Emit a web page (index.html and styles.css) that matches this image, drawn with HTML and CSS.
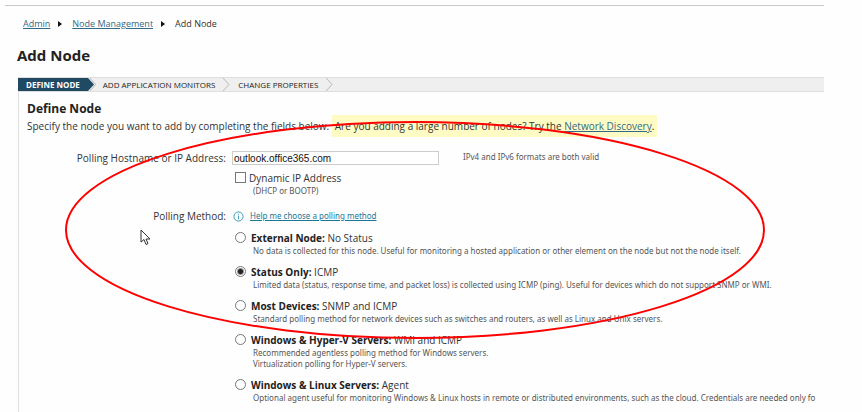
FILE: index.html
```html
<!DOCTYPE html>
<html lang="en">
<head>
<meta charset="utf-8">
<title>Add Node</title>
<link rel="stylesheet" href="styles.css">
</head>
<body>
<div class="page">
  <nav class="breadcrumb" aria-label="Breadcrumb">
    <a href="#">Admin</a>
    <svg class="arrow" viewBox="0 0 4 6" aria-hidden="true"><path d="M0 0 4 3 0 6Z"/></svg>
    <a href="#">Node Management</a>
    <svg class="arrow" viewBox="0 0 4 6" aria-hidden="true"><path d="M0 0 4 3 0 6Z"/></svg>
    <span>Add Node</span>
  </nav>
  <h1>Add Node</h1>
  <section class="wizard">
    <ol class="steps">
      <li class="step current">DEFINE NODE<svg class="tip" viewBox="0 0 10 13" aria-hidden="true"><path class="fill" d="M0 0H2L8 6.500 2 13H0Z"/><path class="line" d="M4 0 9.500 6.500 4 13"/></svg></li>
      <li class="step">ADD APPLICATION MONITORS<svg class="tip" viewBox="0 0 10 13" aria-hidden="true"><path class="line" d="M2 0 8 6.500 2 13"/></svg></li>
      <li class="step">CHANGE PROPERTIES<svg class="tip" viewBox="0 0 10 13" aria-hidden="true"><path class="line" d="M2 0 8 6.500 2 13"/></svg></li>
    </ol>
    <form class="panel">
      <h2>Define Node</h2>
      <p class="intro">Specify the node you want to add by completing the fields below. <span class="hint">Are you adding a large number of nodes? Try the <a href="#">Network Discovery</a>.</span></p>
      <div class="row">
        <label class="name" for="host">Polling Hostname or IP Address:</label>
        <div class="field">
          <input class="host" id="host" type="text" value="outlook.office365.com">
          <span class="note">IPv4 and IPv6 formats are both valid</span>
        </div>
      </div>
      <div class="row dynamic-row">
        <div class="option">
          <input id="dynamic" type="checkbox">
          <label for="dynamic">Dynamic IP Address</label>
          <p class="detail">(DHCP or BOOTP)</p>
        </div>
      </div>
      <div class="row">
        <span class="name" id="method">Polling Method:</span>
        <div class="help">
          <svg class="info" viewBox="0 0 12 12" aria-hidden="true"><circle cx="6" cy="6" r="5"/><path d="M6 5V9M6 3V4"/></svg>
          <a href="#">Help me choose a polling method</a>
        </div>
      </div>
      <div class="methods" role="radiogroup" aria-labelledby="method">
        <div class="option">
          <input id="external" type="radio" name="polling">
          <label for="external"><b>External Node:</b> No Status</label>
          <p class="detail">No data is collected for this node. Useful for monitoring a hosted application or other element on the node but not the node itself.</p>
        </div>
        <div class="option">
          <input id="status" type="radio" name="polling" checked>
          <label for="status"><b>Status Only:</b> ICMP</label>
          <p class="detail">Limited data (status, response time, and packet loss) is collected using ICMP (ping). Useful for devices which do not support SNMP or WMI.</p>
        </div>
        <div class="option">
          <input id="most" type="radio" name="polling">
          <label for="most"><b>Most Devices:</b> SNMP and ICMP</label>
          <p class="detail">Standard polling method for network devices such as switches and routers, as well as Linux and Unix servers.</p>
        </div>
        <div class="option">
          <input id="hyperv" type="radio" name="polling">
          <label for="hyperv"><b>Windows &amp; Hyper-V Servers:</b> WMI and ICMP</label>
          <p class="detail">Recommended agentless polling method for Windows servers.<br>Virtualization polling for Hyper-V servers.</p>
        </div>
        <div class="option">
          <input id="agent" type="radio" name="polling">
          <label for="agent"><b>Windows &amp; Linux Servers:</b> Agent</label>
          <p class="detail">Optional agent useful for monitoring Windows &amp; Linux hosts in remote or distributed environments, such as the cloud. Credentials are needed only fo</p>
        </div>
      </div>
    </form>
  </section>
</div>
<svg class="marker" viewBox="0 0 702 220" aria-hidden="true"><ellipse cx="351" cy="110" rx="349" ry="108"/></svg>
<svg class="pointer" viewBox="0 0 11 17" aria-hidden="true"><path d="M1 1V13L4 10.500 6 15.500 8 14.500 6 10H10Z"/></svg>
</body>
</html>
```
FILE: styles.css
```css
* { box-sizing: border-box; }

body {
  position: relative;
  margin: 0;
  background: #fefefe;
  color: #333;
  font: 10px/14px "Open Sans", sans-serif;
  overflow: hidden;
}

h1, h2, p, ol { margin: 0; padding: 0; }
a { color: #336a85; }

.page {
  margin: 5px 38px 0 5px;
  border-top: 1px solid #c8c8c8;
  overflow: hidden;
}

.breadcrumb {
  display: flex;
  align-items: center;
  gap: 8px;
  padding: 11px 18px 0;
  font-size: 9px;
}
.arrow { width: 4px; height: 6px; margin-right: 2px; fill: #111; }

h1 {
  padding: 14px 12px 0;
  font-size: 15px;
  line-height: 20px;
  color: #222;
}

.wizard { margin: 12px 0 0 13px; }

.steps {
  display: flex;
  height: 15px;
  list-style: none;
  background: #efefef;
  border-top: 1px solid #dedede;
  border-bottom: 1px solid #dedede;
  font-size: 8px;
  line-height: 13px;
  color: #222;
}
.step { display: flex; padding-left: 7px; }
.current { padding-left: 8px; background: #efefef linear-gradient(#204a63, #204a63) no-repeat 0 0 / calc(100% - 10px) 100%; color: #fff; font-weight: bold; }
.tip { width: 10px; height: 13px; margin-left: 6px; }
.tip .fill { fill: #204a63; }
.tip .line { fill: none; stroke: #b9b9b9; }

.panel { padding: 10px 0 12px 8px; border-left: 1px solid #dedede; }
h2 { font-size: 12px; line-height: 13px; color: #222; }
.intro { margin-bottom: 14px; line-height: 22px; white-space: nowrap; }
.hint { display: inline-block; padding: 0 3px; background: #fffbc4; }

.row { display: grid; grid-template-columns: 199px 1fr; column-gap: 6px; margin-top: 13px; }
.name { text-align: right; }
.field { display: flex; gap: 24px; }
.host {
  width: 207px;
  height: 14px;
  padding: 0 1px;
  border: 1px solid #ccc;
  background: #fff;
  color: #111;
  font: 10px "Liberation Sans", sans-serif;
}
.note, .detail, .help { font-family: "Noto Sans", sans-serif; font-size: 8px; }
.note { line-height: 12px; color: #555; }

.option {
  display: grid;
  grid-template-columns: 11px 1fr;
  column-gap: 5px;
  line-height: 13px;
  white-space: nowrap;
}
.option input {
  appearance: none;
  width: 11px;
  height: 11px;
  margin: 0;
  border: 1px solid #777;
  background: #fff;
}
.option input[type="radio"] { border-radius: 50%; }
.option input:checked { background: radial-gradient(circle, #222 2px, #fff 4px); }
.detail { grid-column: 2; padding-left: 2px; line-height: 11px; color: #555; }
b { color: #222; }

.dynamic-row { margin-top: 7px; }
.dynamic-row .option { grid-column: 2; padding-left: 3px; column-gap: 3px; }
.dynamic-row .detail { padding-left: 4px; }
.help { display: flex; align-items: center; gap: 6px; padding-left: 1px; }
.help a { color: #1b7595; }
.info { width: 11px; height: 11px; fill: none; stroke: #2f91b5; }

.methods { display: grid; gap: 10px; margin: 9px 0 0 208px; }

.marker { position: absolute; left: 64px; top: 120px; width: 702px; height: 220px; fill: none; stroke: #f00; stroke-width: 2; pointer-events: none; }
.pointer { position: absolute; left: 140px; top: 229px; width: 11px; height: 17px; fill: #fff; stroke: #333; }
```
